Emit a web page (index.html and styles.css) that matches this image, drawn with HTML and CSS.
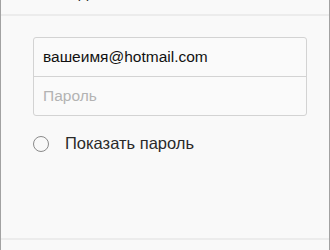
FILE: index.html
```html
<!DOCTYPE html>
<html lang="ru">
<head>
<meta charset="utf-8">
<link rel="stylesheet" href="styles.css">
</head>
<body>
<div class="frame">
  <header class="top">
    <div class="top-inner">
      <span class="logo"></span>
      <span class="title">Вход</span>
    </div>
  </header>
  <main class="content">
    <div class="fields">
      <div class="field email">вашеимя@hotmail.com</div>
      <div class="field placeholder">Пароль</div>
    </div>
    <label class="show">
      <span class="radio"></span>
      <span class="show-text">Показать пароль</span>
    </label>
  </main>
  <footer class="bottom"></footer>
</div>
</body>
</html>
```
FILE: styles.css
```css
html, body {
  margin: 0;
  padding: 0;
  background: #f9f9f9;
}
body {
  font-family: "Liberation Sans", Arial, sans-serif;
  color: #222;
}
.frame {
  width: 330px;
  height: 250px;
  box-sizing: border-box;
  border-left: 1px solid #a2a2a2;
  border-right: 1px solid #a2a2a2;
  display: flex;
  flex-direction: column;
  overflow: hidden;
  background: #f9f9f9;
}
.top {
  height: 14px;
  flex: none;
  overflow: hidden;
  border-bottom: 2px solid #ececec;
}
.top-inner {
  display: flex;
  align-items: flex-end;
  gap: 14px;
  margin-top: -17px;
  height: 18px;
  padding-left: 26px;
}
.logo {
  width: 9px;
  height: 9px;
  border-radius: 50%;
  background: #f7c9a8;
  margin-bottom: 2px;
}
.title {
  font-size: 17px;
  line-height: 20px;
  color: #333;
  margin-bottom: -2px;
}
.content {
  flex: 1;
  padding: 21px 23px 0 32px;
}
.fields {
  border: 1px solid #d3d3d3;
  border-radius: 3px;
  background: #fafafa;
  width: 272px;
}
.field {
  height: 38px;
  display: flex;
  align-items: center;
  padding-left: 9px;
  font-size: 15.5px;
}
.email {
  border-bottom: 1px solid #d3d3d3;
  color: #111;
}
.placeholder {
  color: #b3b3b3;
}
.show {
  display: flex;
  align-items: center;
  gap: 16px;
  margin-top: 18px;
  font-size: 16.5px;
  color: #2a2a2a;
}
.radio {
  width: 14px;
  height: 14px;
  border: 1.5px solid #8a8a8a;
  border-radius: 50%;
}
.bottom {
  height: 10px;
  flex: none;
  border-top: 2px solid #ececec;
}
```
